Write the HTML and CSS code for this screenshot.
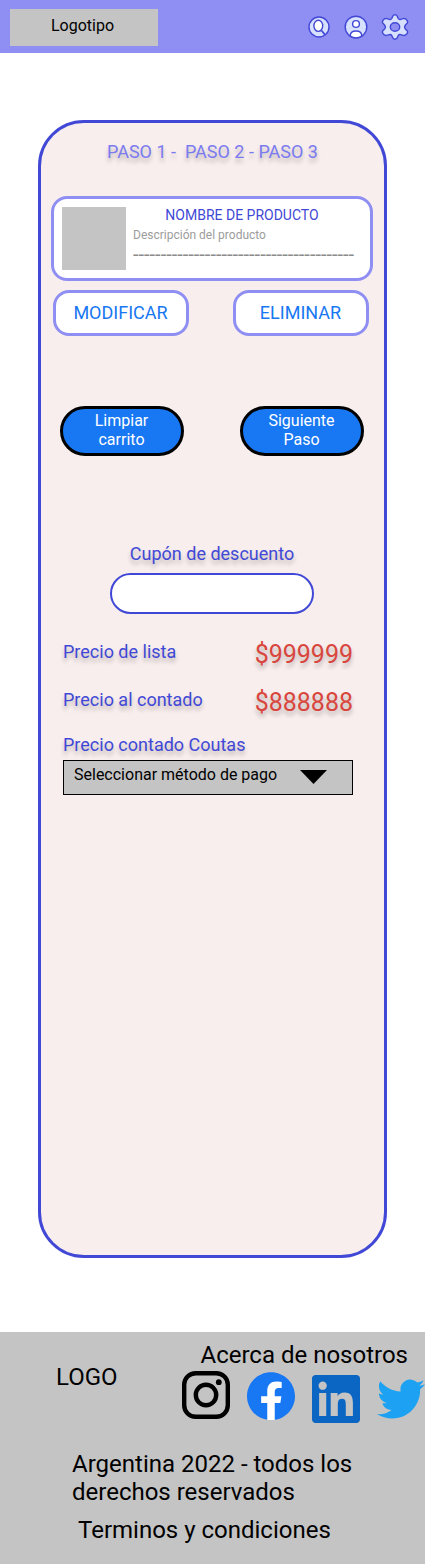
FILE: index.html
```html
<!DOCTYPE html>
<html lang="es">
<head>
<meta charset="utf-8">
<meta name="viewport" content="width=device-width, initial-scale=1">
<title>Carrito</title>
<link rel="stylesheet" href="styles.css">
</head>
<body>
<header class="header">
  <a class="brand" href="#">Logotipo</a>
  <nav class="tools" aria-label="Herramientas">
    <button class="tool" type="button" aria-label="Buscar">
      <svg width="24" height="26" viewBox="0 0 24 26" fill="none" stroke="#4147d5" stroke-width="1.4"><circle cx="12" cy="13" r="10" fill="#d7e0ff"/><path d="M14.5 16.5 17.8 20.5" stroke-width="1.8"/><ellipse cx="11.3" cy="11.8" rx="4.4" ry="5.6" fill="#fff"/></svg>
    </button>
    <button class="tool" type="button" aria-label="Cuenta">
      <svg width="24" height="26" viewBox="0 0 24 26" fill="none" stroke="#4147d5" stroke-width="1.4"><circle cx="12" cy="13" r="10.8" fill="#d7e0ff"/><circle cx="12" cy="10" r="3.4" fill="#fff"/><path d="M6.2 22C6.2 18.5 8.8 17 12 17s5.800 1.500 5.800 5A10.800 10.800 0 0 1 6.200 22Z" fill="#fff"/></svg>
    </button>
    <button class="tool" type="button" aria-label="Configuración">
      <svg width="28" height="26" viewBox="0 0 28 26" fill="none" stroke="#4147d5" stroke-width="1.4" stroke-linejoin="round"><path d="M11.500 2.800Q12 .800 14 .800T16.500 2.800L17.200 4.500Q18 5.800 19.800 5.300L22.200 4.600Q24.600 4.200 26 6.300T25.600 9.700L24.200 11.300Q23 13 24.200 14.700L25.600 16.300Q27.400 17.600 26 19.700T22.200 21.400L19.800 20.700Q18 20.200 17.200 21.500L16.500 23.200Q16 25.200 14 25.200T11.500 23.200L10.800 21.500Q10 20.200 8.200 20.700L5.800 21.400Q3.400 21.800 2 19.700T2.400 16.300L3.800 14.700Q5 13 3.800 11.300L2.400 9.700Q.600 8.400 2 6.300T5.800 4.600L8.200 5.300Q10 5.800 10.800 4.500Z" fill="#d7e0ff"/><ellipse cx="14" cy="13" rx="4.700" ry="4.200" fill="#8f8ff3"/></svg>
    </button>
  </nav>
</header>

<main class="card">
  <h1 class="steps">PASO 1 -&nbsp; PASO 2 - PASO 3</h1>

  <article class="product">
    <div class="thumb"></div>
    <div class="info">
      <h2 class="name">NOMBRE DE PRODUCTO</h2>
      <p class="description">Descripción del producto</p>
      <p class="dashes">----------------------------------------</p>
    </div>
  </article>
  <div class="actions">
    <button class="action" type="button">MODIFICAR</button>
    <button class="action" type="button">ELIMINAR</button>
  </div>

  <div class="flow">
    <button class="pill" type="button">Limpiar<br>carrito</button>
    <button class="pill" type="button">Siguiente<br>Paso</button>
  </div>

  <div class="coupon">
    <label class="label" for="coupon">Cupón de descuento</label>
    <input class="coupon-input" id="coupon" type="text">
  </div>

  <dl class="prices">
    <div class="price-row"><dt class="label">Precio de lista</dt><dd class="price">$999999</dd></div>
    <div class="price-row"><dt class="label">Precio al contado</dt><dd class="price">$888888</dd></div>
  </dl>

  <div class="payment">
    <label class="label" for="method">Precio contado Coutas</label>
    <div class="select-wrap">
      <select class="select" id="method"><option>Seleccionar método de pago</option></select>
      <svg class="arrow" width="27" height="14" viewBox="0 0 27 14"><path d="M0 0H27L13.500 14Z"/></svg>
    </div>
  </div>
</main>

<footer class="footer">
  <div class="footer-top">
    <span class="footer-logo">LOGO</span>
    <div class="about">
      <a class="about-link" href="#">Acerca de nosotros</a>
      <div class="social">
        <a href="#" aria-label="Instagram"><svg width="48" height="52" viewBox="0 0 48 52" fill="none" stroke="#000" stroke-width="4.400"><rect x="2.200" y="2.200" width="43.600" height="43.600" rx="11.500"/><circle cx="24" cy="24" r="10.200"/><circle cx="36.800" cy="11.200" r="2.900" fill="#000" stroke="none"/></svg></a>
        <a href="#" aria-label="Facebook"><svg width="48" height="52" viewBox="0 0 48 52"><g transform="translate(0 1) scale(2)"><path d="M7 4.500h10.500V19L13.874 24h-3.749L7 19Z" fill="#fff"/><path d="M24 12.073c0-6.627-5.373-12-12-12s-12 5.373-12 12c0 5.990 4.388 10.954 10.125 11.854v-8.385H7.078v-3.470h3.047V9.430c0-3.007 1.792-4.669 4.533-4.669 1.312 0 2.686.235 2.686.235v2.953H15.830c-1.491 0-1.956.925-1.956 1.874v2.250h3.328l-.532 3.470h-2.796v8.385C19.612 23.027 24 18.062 24 12.073z" fill="#1877f2"/></g></svg></a>
        <a href="#" aria-label="LinkedIn"><svg width="48" height="52" viewBox="0 0 48 52"><g transform="translate(0 4) scale(2)"><path fill="#0a66c2" d="M20.447 20.452h-3.554v-5.569c0-1.328-.027-3.037-1.852-3.037-1.853 0-2.136 1.445-2.136 2.939v5.667H9.351V9h3.414v1.561h.046c.477-.900 1.637-1.850 3.370-1.850 3.601 0 4.267 2.370 4.267 5.455v6.286zM5.337 7.433a2.062 2.062 0 0 1-2.063-2.065 2.064 2.064 0 1 1 2.063 2.065zm1.782 13.019H3.555V9h3.564v11.452zM22.225 0H1.771C.792 0 0 .774 0 1.729v20.542C0 23.227.792 24 1.771 24h20.451C23.200 24 24 23.227 24 22.271V1.729C24 .774 23.200 0 22.222 0h.003z"/></g></svg></a>
        <a href="#" aria-label="Twitter"><svg width="48" height="52" viewBox="0 0 48 52"><g transform="translate(0 4) scale(2)"><path fill="#1da1f2" d="M23.953 4.570a10 10 0 0 1-2.825.775 4.958 4.958 0 0 0 2.163-2.723c-.951.555-2.005.959-3.127 1.184a4.920 4.920 0 0 0-8.384 4.482C7.690 8.095 4.067 6.130 1.640 3.162a4.822 4.822 0 0 0-.666 2.475c0 1.710.870 3.213 2.188 4.096a4.904 4.904 0 0 1-2.228-.616v.060a4.923 4.923 0 0 0 3.946 4.827 4.996 4.996 0 0 1-2.212.085 4.936 4.936 0 0 0 4.604 3.417 9.867 9.867 0 0 1-6.102 2.105c-.390 0-.779-.023-1.170-.067a13.995 13.995 0 0 0 7.557 2.209c9.053 0 13.998-7.496 13.998-13.985 0-.210 0-.420-.015-.630A9.935 9.935 0 0 0 24 4.590z"/></g></svg></a>
      </div>
    </div>
  </div>
  <p class="legal">Argentina 2022 - todos los derechos reservados</p>
  <a class="terms" href="#">Terminos y condiciones</a>
</footer>
</body>
</html>
```

FILE: styles.css
```css
* { box-sizing: border-box; }

body {
  margin: 0;
  min-height: 100vh;
  display: flex;
  flex-direction: column;
  background: #fff;
  color: #000;
  font-family: Roboto, sans-serif;
  font-size: 16px;
}

h1, h2, p, dl, dd { margin: 0; font-weight: 400; }
a { color: inherit; text-decoration: none; }
button, input, select { font: inherit; margin: 0; }
svg { display: block; }

.header {
  display: flex;
  justify-content: space-between;
  align-items: flex-start;
  padding: 9px 16px 7px 10px;
  background: #8f8ff3;
}
.brand {
  width: 148px;
  height: 37px;
  padding: 7px 3px 0 0;
  background: #c4c4c4;
  line-height: 19px;
  text-align: center;
}
.tools { display: flex; gap: 13px; padding-top: 5px; }
.tool { padding: 0; border: 0; background: none; }

.card {
  flex: 1;
  margin: 67px 38px 74px;
  padding: 18px 0 24px;
  border: 3px solid #4148d6;
  border-radius: 46px;
  background: #f8eeed;
}
.steps {
  font-size: 18px;
  line-height: 21px;
  text-align: center;
  color: #7b7bf0;
  text-shadow: 0 4px 4px rgba(0, 0, 0, .25);
}

.product {
  display: flex;
  gap: 7px;
  margin: 34px 11px 0 10px;
  padding: 8px;
  border: 3px solid #8f8ff3;
  border-radius: 16px;
  background: #fff;
}
.thumb { width: 64px; height: 63px; background: #c4c4c4; }
.info { flex: 1; min-width: 0; }
.name {
  padding-right: 11px;
  font-size: 14px;
  line-height: 17px;
  text-align: center;
  color: #4148d6;
}
.description {
  margin-top: 4px;
  font-size: 12px;
  line-height: 14px;
  color: #9c9c9c;
}
.dashes {
  overflow: hidden;
  font-size: 20px;
  line-height: 25px;
  white-space: nowrap;
  color: #8c8c8c;
}

.actions {
  display: flex;
  justify-content: space-between;
  margin: 9px 15px 0 12px;
}
.action {
  width: 136px;
  height: 46px;
  padding: 0 1px 2px 0;
  border: 3px solid #8f8ff3;
  border-radius: 16px;
  background: #fff;
  color: #1877f2;
  font-size: 18px;
}

.flow {
  display: flex;
  justify-content: space-between;
  margin: 70px 20px 0 19px;
}
.pill {
  width: 124px;
  height: 50px;
  padding: 0 1px 2px 0;
  border: 3px solid #000;
  border-radius: 25px;
  background: #1877f2;
  color: #fff;
  line-height: 19px;
}

.label {
  font-size: 18px;
  line-height: 21px;
  color: #4148d6;
  text-shadow: 0 4px 4px rgba(0, 0, 0, .25);
}
.coupon {
  display: flex;
  flex-direction: column;
  align-items: center;
  gap: 9px;
  margin: 87px 1px 0 0;
}
.coupon-input {
  width: 204px;
  height: 41px;
  padding: 0 16px;
  border: 2px solid #4148d6;
  border-radius: 21px;
  background: #fff;
}

.prices {
  display: grid;
  gap: 20px;
  margin: 27px 31px 0 22px;
}
.price-row { display: flex; justify-content: space-between; }
.price {
  font-size: 25px;
  line-height: 28px;
  color: #d9463e;
  text-shadow: 0 4px 4px rgba(0, 0, 0, .25);
}

.payment {
  display: grid;
  gap: 5px;
  margin: 17px 31px 0 22px;
}
.select-wrap { position: relative; }
.select {
  display: block;
  width: 100%;
  height: 35px;
  padding: 0 60px 6px 10px;
  border: 1px solid #000;
  border-radius: 0;
  appearance: none;
  background: #c4c4c4;
  color: #000;
}
.arrow {
  position: absolute;
  top: 10px;
  right: 26px;
  pointer-events: none;
}

.footer {
  padding: 9px 0 20px;
  background: #c4c4c4;
  font-size: 24px;
  line-height: 28px;
}
.footer-top {
  display: flex;
  justify-content: space-between;
  align-items: flex-start;
}
.footer-logo { margin: 22px 0 0 56px; }
.about { text-align: right; }
.about-link { display: block; padding-right: 17px; }
.social { display: flex; gap: 17px; margin-top: 2px; }
.legal { margin: 27px 60px 0 72px; }
.terms { display: block; margin: 10px 60px 0 78px; }
```
